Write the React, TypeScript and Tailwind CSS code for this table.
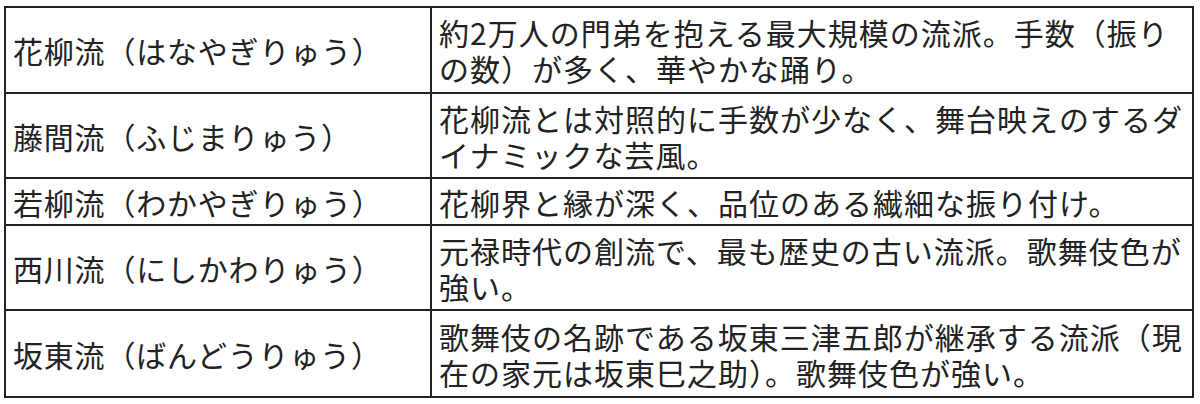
const rows: { name: string; lines: string[]; h: string }[] = [
  {
    name: '花柳流（はなやぎりゅう）',
    lines: ['約2万人の門弟を抱える最大規模の流派。手数（振り', 'の数）が多く、華やかな踊り。'],
    h: 'h-[86px]',
  },
  {
    name: '藤間流（ふじまりゅう）',
    lines: ['花柳流とは対照的に手数が少なく、舞台映えのするダ', 'イナミックな芸風。'],
    h: 'h-[85px]',
  },
  {
    name: '若柳流（わかやぎりゅう）',
    lines: ['花柳界と縁が深く、品位のある繊細な振り付け。'],
    h: 'h-[47px]',
  },
  {
    name: '西川流（にしかわりゅう）',
    lines: ['元禄時代の創流で、最も歴史の古い流派。歌舞伎色が', '強い。'],
    h: 'h-[85px]',
  },
  {
    name: '坂東流（ばんどうりゅう）',
    lines: ['歌舞伎の名跡である坂東三津五郎が継承する流派（現', '在の家元は坂東巳之助）。歌舞伎色が強い。'],
    h: 'h-[87px]',
  },
]

export default function App() {
  return (
    <div className="w-[1200px] h-[404px] bg-white pt-[6px] pl-[4px] font-['Noto_Sans_CJK_JP',sans-serif] text-[#222]">
      <table className="w-[1190px] border-collapse table-fixed">
        <colgroup>
          <col className="w-[426px]" />
          <col />
        </colgroup>
        <tbody>
          {rows.map(r => (
            <tr key={r.name} className={r.h}>
              <td className="border-2 border-[#222] pl-[7px] py-0 align-middle text-[30px] leading-[36px] tracking-[0.8px] whitespace-nowrap">
                {r.name}
              </td>
              <td className="border-2 border-[#222] pl-[7px] py-0 align-middle text-[30px] leading-[36px] tracking-[1px] whitespace-nowrap">
                {r.lines.map((l, i) => (
                  <div key={i}>{l}</div>
                ))}
              </td>
            </tr>
          ))}
        </tbody>
      </table>
    </div>
  )
}
